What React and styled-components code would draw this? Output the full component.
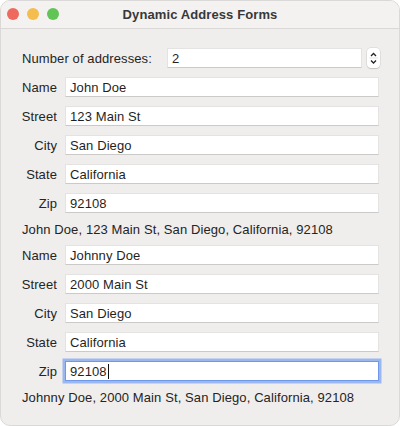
import React from 'react';
import styled, { createGlobalStyle } from 'styled-components';

const addresses = [
    { name: 'John Doe', street: '123 Main St', city: 'San Diego', state: 'California', zip: '92108' },
    { name: 'Johnny Doe', street: '2000 Main St', city: 'San Diego', state: 'California', zip: '92108' },
];

const fields = [
    { key: 'name', label: 'Name' },
    { key: 'street', label: 'Street' },
    { key: 'city', label: 'City' },
    { key: 'state', label: 'State' },
    { key: 'zip', label: 'Zip' },
];

const App = () => {
    return (
        <>
            <GlobalStyle />
            <Window>
                <TitleBar>
                    <Lights>
                        <Light $color="#ee6a5f" />
                        <Light $color="#f5bd4f" />
                        <Light $color="#61c454" />
                    </Lights>
                    <Title>Dynamic Address Forms</Title>
                </TitleBar>
                <Content>
                    <SpinRow>
                        <span>Number of addresses:</span>
                        <Field>2</Field>
                        <Stepper>
                            <svg width="13" height="20" viewBox="0 0 13 20">
                                <path d="M4 8 L6.5 5.5 L9 8" fill="none" stroke="#222" strokeWidth="1.3" />
                                <line x1="2" y1="10" x2="11" y2="10" stroke="#e6e6e6" strokeWidth="1" />
                                <path d="M4 12.5 L6.5 15 L9 12.5" fill="none" stroke="#222" strokeWidth="1.3" />
                            </svg>
                        </Stepper>
                    </SpinRow>
                    <Groups>
                        {addresses.map((a, i) => (
                            <Group key={i}>
                                {fields.map((f) => {
                                    const focused = i == 1 && f.key == 'zip';
                                    return (
                                        <Row key={f.key}>
                                            <Label>{f.label}</Label>
                                            <Field $focused={focused}>
                                                {a[f.key]}
                                                {focused && <Caret />}
                                            </Field>
                                        </Row>
                                    );
                                })}
                                <Summary>
                                    {a.name}, {a.street}, {a.city}, {a.state}, {a.zip}
                                </Summary>
                            </Group>
                        ))}
                    </Groups>
                </Content>
            </Window>
        </>
    );
};

const GlobalStyle = createGlobalStyle`
    html, body {
        margin: 0;
        padding: 0;
        background: #ffffff;
    }
    body {
        font-family: 'Liberation Sans', Arial, sans-serif;
        font-size: 13px;
        letter-spacing: 0.1px;
        color: #242424;
    }
`;

const Window = styled.div`
    width: 400px;
    height: 426px;
    box-sizing: border-box;
    border-radius: 10px;
    overflow: hidden;
    background: #efeeed;
    border: 1px solid #dad9d8;
    display: flex;
    flex-direction: column;
`;

const TitleBar = styled.div`
    height: 27px;
    flex-shrink: 0;
    background: #f3f2f1;
    border-bottom: 1px solid #d9d8d7;
    display: flex;
    align-items: center;
    justify-content: center;
    position: relative;
`;

const Lights = styled.div`
    position: absolute;
    left: 6px;
    top: 7px;
    display: flex;
    gap: 8px;
`;

const Light = styled.div`
    width: 12px;
    height: 12px;
    border-radius: 50%;
    background: ${(p) => p.$color};
`;

const Title = styled.div`
    font-weight: bold;
    font-size: 13px;
    color: #383838;
`;

const Content = styled.div`
    padding: 19px 20px 0 20px;
    display: flex;
    flex-direction: column;
    gap: 9px;
`;

const SpinRow = styled.div`
    display: flex;
    align-items: center;
    height: 20px;
    padding-left: 1px;
    span {
        width: 145px;
        flex-shrink: 0;
    }
`;

const Stepper = styled.div`
    width: 13px;
    height: 20px;
    margin-left: 5px;
    margin-right: -1px;
    border-radius: 4px;
    background: #ffffff;
    box-shadow: 0 0 0 0.5px rgba(0, 0, 0, 0.12), 0 1px 1px rgba(0, 0, 0, 0.12);
    display: flex;
    svg {
        display: block;
    }
`;

const Groups = styled.div`
    display: flex;
    flex-direction: column;
    gap: 7px;
`;

const Group = styled.div`
    display: flex;
    flex-direction: column;
    gap: 9px;
`;

const Row = styled.div`
    display: flex;
    align-items: center;
    gap: 8px;
    height: 20px;
`;

const Label = styled.div`
    width: 36px;
    text-align: right;
    flex-shrink: 0;
`;

const Field = styled.div`
    flex: 1;
    height: 20px;
    box-sizing: border-box;
    padding: 0 4px;
    display: flex;
    align-items: center;
    background: #ffffff;
    border: 1px solid #e4e3e2;
    border-bottom-color: #cbcac9;
    color: #1f1f1f;
    ${(p) =>
        p.$focused &&
        `
        border-color: #6f98e8;
        box-shadow: 0 0 0 2.5px #9bb7ef;
    `}
`;

const Caret = styled.span`
    display: inline-block;
    width: 1px;
    height: 15px;
    background: #111;
    margin-left: 1px;
`;

const Summary = styled.div`
    height: 16px;
    line-height: 16px;
    padding-left: 1px;
`;

export default App;
